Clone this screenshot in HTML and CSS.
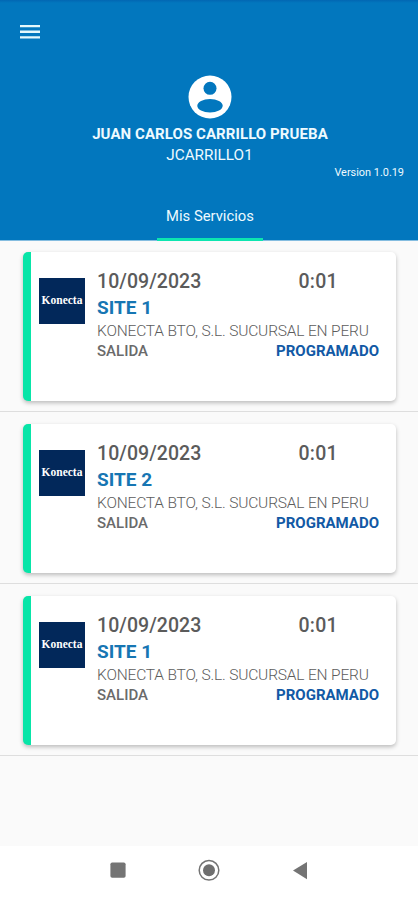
FILE: index.html
```html
<!DOCTYPE html>
<html lang="es">
<head>
<meta charset="utf-8">
<title>Mis Servicios</title>
<link rel="stylesheet" href="styles.css">
</head>
<body>
<header class="header">
  <svg class="menu" viewBox="0 0 20 14"><path d="M0 0h20v2.3H0zM0 5.6h20v2.3H0zM0 11.2h20v2.3H0z" fill="#e4f8fc"/></svg>
  <svg class="avatar" viewBox="0 0 44 44"><circle cx="22" cy="22" r="21.5" fill="#fff"/><circle cx="22" cy="13.3" r="6.5" fill="#0277be"/><ellipse cx="22" cy="30.8" rx="12.7" ry="6.7" fill="#0277be"/></svg>
  <h1 class="name">JUAN CARLOS CARRILLO PRUEBA</h1>
  <div class="user">JCARRILLO1</div>
  <div class="version">Version 1.0.19</div>
  <nav class="tabs"><a class="tab">Mis Servicios</a></nav>
</header>
<main class="list">
  <section class="row"><article class="card">
    <div class="logo">Konecta</div>
    <div class="info">
      <div class="line when"><span class="date">10/09/2023</span><span class="time">0:01</span></div>
      <div class="site">SITE 1</div>
      <div class="company">KONECTA BTO, S.L. SUCURSAL EN PERU</div>
      <div class="line state"><span class="kind">SALIDA</span><span class="status">PROGRAMADO</span></div>
    </div>
  </article></section>
  <section class="row"><article class="card">
    <div class="logo">Konecta</div>
    <div class="info">
      <div class="line when"><span class="date">10/09/2023</span><span class="time">0:01</span></div>
      <div class="site">SITE 2</div>
      <div class="company">KONECTA BTO, S.L. SUCURSAL EN PERU</div>
      <div class="line state"><span class="kind">SALIDA</span><span class="status">PROGRAMADO</span></div>
    </div>
  </article></section>
  <section class="row"><article class="card">
    <div class="logo">Konecta</div>
    <div class="info">
      <div class="line when"><span class="date">10/09/2023</span><span class="time">0:01</span></div>
      <div class="site">SITE 1</div>
      <div class="company">KONECTA BTO, S.L. SUCURSAL EN PERU</div>
      <div class="line state"><span class="kind">SALIDA</span><span class="status">PROGRAMADO</span></div>
    </div>
  </article></section>
</main>
<footer class="navbar">
  <svg viewBox="0 0 24 24"><rect x="4.4" y="4.4" width="15.2" height="15.4" rx="1.8" fill="#747474"/></svg>
  <svg viewBox="0 0 24 24"><circle cx="12" cy="12.3" r="9.8" fill="none" stroke="#747474" stroke-width="1.5"/><circle cx="12" cy="12.3" r="6" fill="#6f6f6f"/></svg>
  <svg viewBox="0 0 24 24"><path d="M5 12.4 19 4v17.2z" fill="#747474"/></svg>
</footer>
</body>
</html>
```
FILE: styles.css
```css
* { box-sizing: border-box; }
body {
  margin: 0;
  width: 418px;
  height: 900px;
  overflow: hidden;
  display: flex;
  flex-direction: column;
  font-family: Roboto, "Liberation Sans", sans-serif;
  background: #fafafa;
  white-space: nowrap;
}
.header {
  height: 240px;
  flex: none;
  display: flex;
  flex-direction: column;
  align-items: center;
  background: linear-gradient(#0267b3 0, #0277be 3px);
  color: #eefaff;
  box-shadow: 0 1px 0 #85bde0;
}
.menu { width: 20px; height: 14px; margin: 25px 0 0 20px; align-self: flex-start; }
.avatar { width: 44px; height: 44px; margin: 36px 0 0 1px; }
.name { margin: 5px 0 0 2px; font-size: 15px; line-height: 20px; font-weight: 700; letter-spacing: .08px; }
.user { font-size: 15.3px; line-height: 20px; margin: 1px 0 0 1px; }
.version { align-self: flex-end; margin: 1px 14px 0 0; font-size: 10.9px; line-height: 13px; }
.tabs { margin: auto 0 -1px 2px; display: flex; }
.tab {
  width: 106px;
  height: 36px;
  line-height: 22px;
  text-align: center;
  font-size: 14.8px;
  border-bottom: 3px solid #0de5b0;
}
.list { flex: 1; }
.row { height: 172px; padding: 11.5px 22px 0 23px; border-bottom: 1px solid #dedede; }
.card {
  height: 149px;
  display: flex;
  border-left: 8px solid #08e5a8;
  border-radius: 5px;
  background: #fff;
  box-shadow: 0 2px 4px rgba(0, 0, 0, .25);
}
.logo {
  width: 46px;
  height: 46px;
  margin: 26.5px 12px 0 8px;
  background: #02285a;
  color: #fff;
  text-align: center;
  font: 700 11.5px/44px "Liberation Serif", serif;
}
.info { width: 282px; padding-top: 17px; color: #5b5b5b; }
.line { display: flex; justify-content: space-between; }
.when { font-size: 19.5px; line-height: 25px; font-weight: 500; letter-spacing: .05px; padding-right: 41px; }
.time { letter-spacing: .3px; }
.site { font-size: 19px; line-height: 27px; font-weight: 700; color: #1676b3; }
.company { font-size: 15.5px; line-height: 20px; font-weight: 300; color: #5c5c5c; letter-spacing: -.17px; }
.state { font-size: 15px; line-height: 20px; font-weight: 500; color: #6a6a6a; }
.status { color: #1259a5; font-weight: 700; }
.navbar {
  height: 54px;
  flex: none;
  display: flex;
  justify-content: space-between;
  padding: 12px 106px 0;
  background: #fff;
}
.navbar svg { width: 24px; height: 24px; }
```
